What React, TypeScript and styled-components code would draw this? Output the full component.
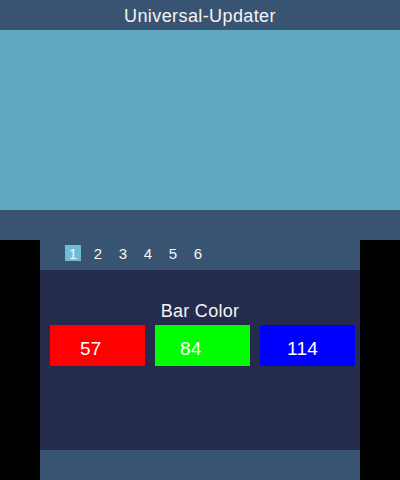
import React from "react";
import styled, { createGlobalStyle } from "styled-components";

const Global = createGlobalStyle`
  html, body { margin: 0; padding: 0; background: #000; }
  body { font-family: "Liberation Sans", Arial, sans-serif; }
`;

const Page = styled.div`
  width: 400px;
  height: 480px;
  display: flex;
  flex-direction: column;
  background: #000;
`;

const TopScreen = styled.div`
  width: 400px;
  height: 240px;
  display: flex;
  flex-direction: column;
`;

const Bar = styled.div`
  height: 30px;
  flex: 0 0 30px;
  background: #395473;
  color: #f4f4f4;
  display: flex;
  align-items: center;
  justify-content: center;
`;

const Title = styled.span`
  font-size: 18px;
  line-height: 20px;
  letter-spacing: 0.4px;
  margin-top: 2px;
`;

const Canvas = styled.div`
  flex: 1;
  background: #5fa8c1;
`;

const BottomScreen = styled.div`
  width: 320px;
  height: 240px;
  margin: 0 auto;
  display: flex;
  flex-direction: column;
`;

const TabBar = styled.div`
  height: 30px;
  flex: 0 0 30px;
  background: #395473;
  display: flex;
  align-items: flex-start;
  padding: 5px 0 0 25px;
  gap: 9px;
  box-sizing: border-box;
`;

const Tab = styled.div<{ $active?: boolean }>`
  width: 16px;
  height: 16px;
  background: ${(p) => (p.$active ? "#6fbcd9" : "transparent")};
  color: #f4f4f4;
  font-size: 15px;
  line-height: 17px;
  display: flex;
  justify-content: center;
`;

const Content = styled.div`
  flex: 1;
  background: #252b4d;
  display: flex;
  flex-direction: column;
  align-items: center;
  padding-top: 31px;
`;

const Label = styled.div`
  color: #f4f4f4;
  font-size: 18px;
  line-height: 20px;
  letter-spacing: 0.3px;
`;

const Swatches = styled.div`
  align-self: stretch;
  display: flex;
  gap: 10px;
  margin-top: 4px;
  padding-left: 10px;
`;

const Swatch = styled.div<{ $bg: string; $offset: number }>`
  width: 95px;
  height: 41px;
  box-sizing: border-box;
  background: ${(p) => p.$bg};
  color: #fff;
  font-size: 19px;
  line-height: 20px;
  letter-spacing: 0.3px;
  padding: 14px 0 0 ${(p) => p.$offset}px;
`;

const tabs = [1, 2, 3, 4, 5, 6];
const colors = [
  { bg: "#ff0000", value: 57, offset: 30 },
  { bg: "#00ff00", value: 84, offset: 25 },
  { bg: "#0000ff", value: 114, offset: 27 },
];

export default function App() {
  return (
    <>
      <Global />
      <Page>
        <TopScreen>
          <Bar>
            <Title>Universal-Updater</Title>
          </Bar>
          <Canvas />
          <Bar />
        </TopScreen>
        <BottomScreen>
          <TabBar>
            {tabs.map((t) => (
              <Tab key={t} $active={t === 1}>
                {t}
              </Tab>
            ))}
          </TabBar>
          <Content>
            <Label>Bar Color</Label>
            <Swatches>
              {colors.map((c) => (
                <Swatch key={c.value} $bg={c.bg} $offset={c.offset}>
                  {c.value}
                </Swatch>
              ))}
            </Swatches>
          </Content>
          <Bar />
        </BottomScreen>
      </Page>
    </>
  );
}
